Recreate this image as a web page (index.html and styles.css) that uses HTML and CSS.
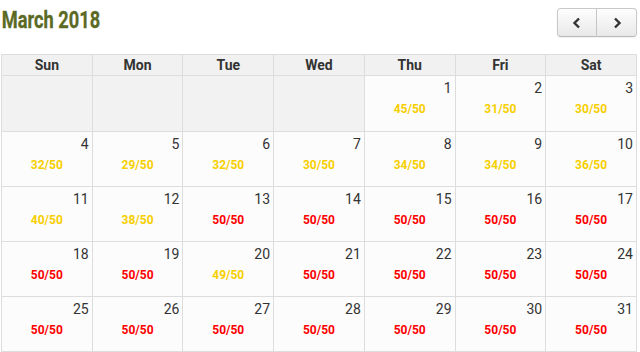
FILE: index.html
```html
<!DOCTYPE html>
<html>
<head>
<meta charset="utf-8">
<link rel="stylesheet" href="styles.css">
</head>
<body>
<div class="toolbar">
  <h2 class="title"><span>March 2018</span></h2>
  <div class="btn-group">
    <button class="btn" aria-label="prev"><svg width="10" height="12" viewBox="0 0 10 12"><path d="M7 1.5 L2.5 6 L7 10.5" fill="none" stroke="#333" stroke-width="2.4"/></svg></button>
    <button class="btn" aria-label="next"><svg width="10" height="12" viewBox="0 0 10 12"><path d="M3 1.5 L7.5 6 L3 10.5" fill="none" stroke="#333" stroke-width="2.4"/></svg></button>
  </div>
</div>
<table class="cal">
  <thead>
    <tr><th>Sun</th><th>Mon</th><th>Tue</th><th>Wed</th><th>Thu</th><th>Fri</th><th>Sat</th></tr>
  </thead>
  <tbody>
    <tr>
      <td class="off"></td><td class="off"></td><td class="off"></td><td class="off"></td>
      <td><div class="num">1</div><div class="cnt y">45/50</div></td>
      <td><div class="num">2</div><div class="cnt y">31/50</div></td>
      <td><div class="num">3</div><div class="cnt y">30/50</div></td>
    </tr>
    <tr>
      <td><div class="num">4</div><div class="cnt y">32/50</div></td>
      <td><div class="num">5</div><div class="cnt y">29/50</div></td>
      <td><div class="num">6</div><div class="cnt y">32/50</div></td>
      <td><div class="num">7</div><div class="cnt y">30/50</div></td>
      <td><div class="num">8</div><div class="cnt y">34/50</div></td>
      <td><div class="num">9</div><div class="cnt y">34/50</div></td>
      <td><div class="num">10</div><div class="cnt y">36/50</div></td>
    </tr>
    <tr>
      <td><div class="num">11</div><div class="cnt y">40/50</div></td>
      <td><div class="num">12</div><div class="cnt y">38/50</div></td>
      <td><div class="num">13</div><div class="cnt r">50/50</div></td>
      <td><div class="num">14</div><div class="cnt r">50/50</div></td>
      <td><div class="num">15</div><div class="cnt r">50/50</div></td>
      <td><div class="num">16</div><div class="cnt r">50/50</div></td>
      <td><div class="num">17</div><div class="cnt r">50/50</div></td>
    </tr>
    <tr>
      <td><div class="num">18</div><div class="cnt r">50/50</div></td>
      <td><div class="num">19</div><div class="cnt r">50/50</div></td>
      <td><div class="num">20</div><div class="cnt y">49/50</div></td>
      <td><div class="num">21</div><div class="cnt r">50/50</div></td>
      <td><div class="num">22</div><div class="cnt r">50/50</div></td>
      <td><div class="num">23</div><div class="cnt r">50/50</div></td>
      <td><div class="num">24</div><div class="cnt r">50/50</div></td>
    </tr>
    <tr>
      <td><div class="num">25</div><div class="cnt r">50/50</div></td>
      <td><div class="num">26</div><div class="cnt r">50/50</div></td>
      <td><div class="num">27</div><div class="cnt r">50/50</div></td>
      <td><div class="num">28</div><div class="cnt r">50/50</div></td>
      <td><div class="num">29</div><div class="cnt r">50/50</div></td>
      <td><div class="num">30</div><div class="cnt r">50/50</div></td>
      <td><div class="num">31</div><div class="cnt r">50/50</div></td>
    </tr>
  </tbody>
</table>
</body>
</html>
```
FILE: styles.css
```css
html, body {
  margin: 0;
  padding: 0;
  background: #fff;
  font-family: Roboto, "Liberation Sans", Arial, sans-serif;
  color: #333;
}
body {
  padding: 0 3px 0 1px;
}
.toolbar {
  display: flex;
  justify-content: space-between;
  align-items: flex-start;
  height: 54px;
}
.title {
  margin: 0;
  padding-top: 6px;
  font-size: 24px;
  font-weight: 700;
  line-height: 28px;
  color: #5b6a24;
}
.title span {
  display: inline-block;
  transform: scaleX(0.76);
  transform-origin: 0 0;
  padding-left: 1px;
  -webkit-text-stroke: 0.3px #5b6a24;
}
.btn-group {
  display: flex;
  margin-top: 8px;
}
.btn {
  width: 40px;
  height: 29px;
  margin: 0;
  padding: 0;
  display: flex;
  align-items: center;
  justify-content: center;
  border: 1px solid #c8c8c8;
  border-bottom-color: #b8b8b8;
  background: linear-gradient(#fefefe, #e8e8e8);
  box-shadow: inset 0 1px 0 rgba(255,255,255,0.3), 0 1px 2px rgba(0,0,0,0.06);
}
.btn:first-child {
  border-radius: 4px 0 0 4px;
}
.btn:last-child {
  border-radius: 0 4px 4px 0;
  border-left: none;
}
.cal {
  width: 636px;
  border-collapse: collapse;
  table-layout: fixed;
}
.cal th {
  height: 20px;
  padding: 0;
  border: 1px solid #ddd;
  background: #f1f1f1;
  font-size: 14px;
  font-weight: 700;
  color: #333;
  text-align: center;
}
.cal td {
  height: 54px;
  padding: 0;
  vertical-align: top;
  border: 1px solid #ddd;
  background: #fcfcfc;
}
.cal tbody tr:first-child td {
  height: 55px;
}
.cal td.off {
  background: #f2f2f2;
}
.num {
  text-align: right;
  padding: 4px 3px 0 0;
  font-size: 14px;
  line-height: 17px;
  color: #333;
}
.cnt {
  text-align: center;
  margin-top: 5px;
  font-size: 12px;
  font-weight: 700;
  line-height: 14px;
}
.cnt.y { color: #f7cf00; }
.cnt.r { color: #fe0000; }
```
